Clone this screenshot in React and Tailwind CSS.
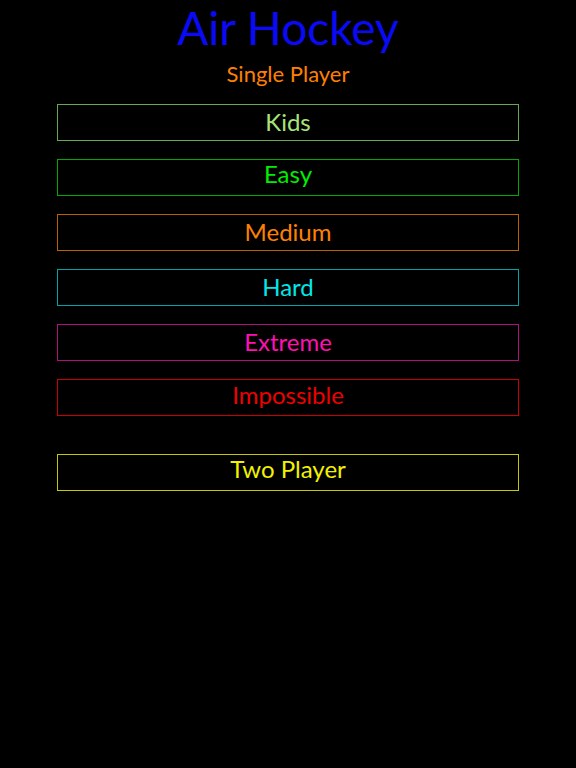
import React from "react";

const items = [
  { label: "Kids", text: "text-[#a6e57a]", border: "border-[#6aa84f]", pad: "pb-[2px]" },
  { label: "Easy", text: "text-[#00ee00]", border: "border-[#00a800]", pad: "pb-[7px]" },
  { label: "Medium", text: "text-[#ff8000]", border: "border-[#b86200]", pad: "pb-[2px]" },
  { label: "Hard", text: "text-[#00e8e8]", border: "border-[#00a3a3]", pad: "pb-[2px]" },
  { label: "Extreme", text: "text-[#ff10b0]", border: "border-[#b0107c]", pad: "pb-[2px]" },
  { label: "Impossible", text: "text-[#ee0000]", border: "border-[#c80000]", pad: "pb-[5px]" },
];

function Btn({ label, text, border, pad }) {
  return (
    <div
      className={`mx-[57px] h-[37px] border ${border} flex items-center justify-center ${pad}`}
    >
      <span className={`${text} text-[24px] leading-none`}>{label}</span>
    </div>
  );
}

export default function App() {
  return (
    <div
      className="w-[576px] h-[768px] bg-black flex flex-col"
      style={{ fontFamily: "Lato, 'Noto Sans', sans-serif" }}
    >
      <div className="flex flex-col items-center pt-[2px]">
        <div className="text-[#0a0af5] text-[46px] leading-[52px]">Air Hockey</div>
        <div className="text-[#ff8000] text-[22px] leading-[24px] mt-[8px]">Single Player</div>
      </div>
      <div className="flex flex-col gap-[18px] mt-[18px]">
        {items.map((it) => (
          <Btn key={it.label} {...it} />
        ))}
      </div>
      <div className="mt-[38px]">
        <Btn label="Two Player" text="text-[#f2f200]" border="border-[#c8c800]" pad="pb-[7px]" />
      </div>
    </div>
  );
}
